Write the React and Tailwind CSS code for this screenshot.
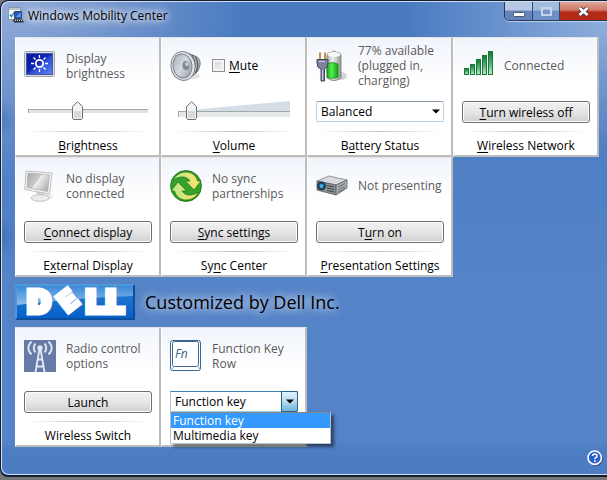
import React, { useState } from "react";

// "&" marks the access key, same as in a win32 resource string
function Caption({ text }) {
  const at = text.indexOf("&");
  if (at < 0) return <>{text}</>;
  return (
    <>
      {text.slice(0, at)}
      <span className="underline underline-offset-2">{text[at + 1]}</span>
      {text.slice(at + 2)}
    </>
  );
}

function Tile({ icon, status, caption, htmlFor, children }) {
  return (
    <section className="h-[120px] min-w-0 pl-2 pr-[7px] flex flex-col border-t border-l border-r-2 border-b-2 border-t-[#e4e4e4] border-l-white border-r-[#bdbdbd] border-b-[#bdbdbd] bg-linear-to-b from-[#f0f4fb] to-white to-35%">
      <div className="h-[55px] shrink-0 flex items-center">
        <div className="w-8 h-8 shrink-0">{icon}</div>
        <div className="ml-2.5 flex-1 leading-[15px] whitespace-nowrap text-[#5a5a5a]">
          {status}
        </div>
      </div>
      <div className="mt-2 h-[22px] shrink-0">{children}</div>
      <div className="mt-2 mx-0.5 h-px shrink-0 bg-linear-to-r from-transparent via-[#c4c4c4] to-transparent" />
      <div className="mt-1.5 leading-[15px] text-center whitespace-nowrap text-black">
        {htmlFor ? (
          <label htmlFor={htmlFor}>
            <Caption text={caption} />
          </label>
        ) : (
          <Caption text={caption} />
        )}
      </div>
    </section>
  );
}

function PushButton({ text }) {
  return (
    <button
      type="button"
      className="block w-full h-[22px] rounded-[3px] border border-[#707070] bg-linear-to-b from-[#f2f2f2] via-[#e6e6e6] via-50% to-[#cfcfcf] leading-[15px] whitespace-nowrap text-black shadow-[inset_0_0_0_1px_#fbfbfb]"
    >
      <Caption text={text} />
    </button>
  );
}

function Slider({ id, value, onChange, wedge }) {
  return (
    <div className={wedge ? "relative h-[22px] mx-2" : "relative h-[22px] mx-1"}>
      {wedge && (
        <svg
          className="absolute left-0 top-0 w-full h-2.5"
          viewBox="0 0 111 10"
          preserveAspectRatio="none"
        >
          <path d="M12 10V9L111 0V10Z" fill="#d5dee6" />
        </svg>
      )}
      <div
        className={
          wedge
            ? "absolute inset-x-0 top-2.5 h-1.5 border-t border-l border-[#a3a8a8] bg-[#e4e8e7]"
            : "absolute inset-x-0 top-2 h-1 border-t border-l border-[#a3a8a8] bg-[#dfe3e2]"
        }
      />
      <svg
        className="absolute top-0 -ml-[5px]"
        style={{ left: `${value}%` }}
        width="11"
        height="19"
        viewBox="0 0 11 19"
      >
        <path
          d="M5.5 .7L10.5 5.5V17.2L9.5 18.5H1.5L.5 17.2V5.5Z"
          fill="#f3f3f3"
          stroke="#6f7071"
        />
        <path d="M2 10H9V17H2Z" fill="#d9dadb" />
      </svg>
      <input
        id={id}
        type="range"
        value={value}
        onChange={(e) => onChange(Number(e.target.value))}
        className="absolute inset-0 w-full h-full opacity-0"
      />
    </div>
  );
}

function BrightnessIcon() {
  return (
    <svg width="32" height="32" viewBox="0 0 32 32">
      <defs>
        <linearGradient id="screen" x1="0" y1="0" x2="1" y2="1">
          <stop offset="0" stopColor="#0a1a9c" />
          <stop offset=".45" stopColor="#0b22b4" />
          <stop offset=".55" stopColor="#2c4fd6" />
          <stop offset="1" stopColor="#5f86ee" />
        </linearGradient>
      </defs>
      <rect x=".5" y="1.5" width="30" height="25" rx="1" fill="#d9dde2" stroke="#a2a7ae" />
      <rect x="2.5" y="3.5" width="26" height="21" fill="url(#screen)" stroke="#4a56a5" />
      <circle cx="15.500" cy="13.500" r="3.700" fill="none" stroke="#fff" strokeWidth="1.800" />
      <path
        d="M15.500 5v3M15.500 19v3M7 13.500h3M21 13.500h3M9.500 7.500l2 2M19.500 17.500l2 2M21.500 7.500l-2 2M11.500 17.500l-2 2"
        stroke="#fff"
        strokeWidth="1.300"
      />
    </svg>
  );
}

function SpeakerIcon() {
  return (
    <svg width="32" height="32" viewBox="0 0 32 32">
      <defs>
        <linearGradient id="cone" x1="0" y1="0" x2="1" y2="1">
          <stop offset="0" stopColor="#9fa8b2" />
          <stop offset=".5" stopColor="#d5dae0" />
          <stop offset="1" stopColor="#8e969f" />
        </linearGradient>
      </defs>
      <ellipse cx="23" cy="26" rx="7" ry="3" fill="#000" opacity=".1" />
      <path d="M15 2L25 6Q31 8 30 15Q29 22 24 25L15 30Z" fill="#b3b9bf" stroke="#777e85" />
      <path d="M22 5Q28 14 22 26M25.500 6.500Q30 15 25.500 23.500" fill="none" stroke="#535a61" strokeWidth="1.300" />
      <ellipse cx="13" cy="16" rx="12" ry="14.500" fill="#e6e9ec" stroke="#80878e" transform="rotate(-8 13 16)" />
      <ellipse cx="12.500" cy="16" rx="9.500" ry="12" fill="url(#cone)" stroke="#777f87" transform="rotate(-8 12.500 16)" />
      <path d="M17 13L6 7M16 19L8 26" stroke="#c6ccd2" />
      <ellipse cx="16" cy="15.500" rx="3.500" ry="4.500" fill="#7f8891" />
      <circle cx="17" cy="14" r="2.200" fill="#bdc3c9" />
    </svg>
  );
}

function BatteryIcon() {
  return (
    <svg width="32" height="32" viewBox="0 0 32 32">
      <defs>
        <linearGradient id="glass">
          <stop offset="0" stopColor="#a3a9a5" />
          <stop offset=".4" stopColor="#eef0ef" />
          <stop offset="1" stopColor="#8d9391" />
        </linearGradient>
        <linearGradient id="charge">
          <stop offset="0" stopColor="#1ba51b" />
          <stop offset=".4" stopColor="#50f250" />
          <stop offset="1" stopColor="#12a012" />
        </linearGradient>
      </defs>
      <ellipse cx="25" cy="26" rx="6" ry="4" fill="#000" opacity=".16" />
      <path d="M11 5Q11 2.500 15 2.500Q18 -.5 21 2.500Q25 2.500 25 5V28Q18 33 11 28Z" fill="url(#glass)" stroke="#888" />
      <ellipse cx="18" cy="4.500" rx="6.500" ry="2.500" fill="#f8f8f8" />
      <path d="M11 14Q17 11 22 14V27Q17 30 11 27Z" fill="url(#charge)" stroke="#0d8a12" strokeWidth=".7" />
      <path d="M4 9V2.500M9 9V2.500" stroke="#c98f45" strokeWidth="2" />
      <path d="M1 9.500H12V13Q12 18 8.500 19V31H5V19Q1 18 1 13Z" fill="#7f829d" stroke="#43455f" />
      <path d="M3 11.500H9M6.500 20V30" stroke="#c9cbe0" />
    </svg>
  );
}

function SignalIcon() {
  return (
    <svg width="32" height="32" viewBox="0 0 32 32">
      <defs>
        <linearGradient id="bar" x1="0" y1="0" x2="0" y2="1">
          <stop offset="0" stopColor="#107a35" />
          <stop offset=".5" stopColor="#4fae6c" />
          <stop offset="1" stopColor="#b9f0c8" />
        </linearGradient>
      </defs>
      <g fill="url(#bar)" stroke="#19793b">
        <rect x="2.500" y="18.500" width="4" height="6" />
        <rect x="8.500" y="14.500" width="4" height="10" />
        <rect x="14.500" y="9.500" width="4" height="15" />
        <rect x="20.500" y="5.500" width="4" height="19" />
        <rect x="26.500" y="1.500" width="4" height="23" />
      </g>
    </svg>
  );
}

function MonitorIcon() {
  return (
    <svg width="32" height="32" viewBox="0 0 32 32">
      <defs>
        <linearGradient id="panel" x1="0" y1="0" x2="1" y2=".6">
          <stop offset="0" stopColor="#a8a8a8" />
          <stop offset=".5" stopColor="#c9c9c9" />
          <stop offset=".55" stopColor="#eee" />
          <stop offset="1" stopColor="#b5b5b5" />
        </linearGradient>
      </defs>
      <ellipse cx="22" cy="27" rx="7" ry="3" fill="#000" opacity=".08" />
      <path d="M12 21L20 23V27H13Z" fill="#d0d0d0" />
      <ellipse cx="16" cy="28" rx="9" ry="3.300" fill="#ececec" stroke="#c4c4c4" />
      <path d="M2 1L28 3L25.500 24L.8 19.500Z" fill="#f3f3f3" stroke="#c0c0c0" />
      <path d="M4 3L25.500 5L23.500 21.500L3 17.500Z" fill="url(#panel)" stroke="#aaa" strokeWidth=".7" />
    </svg>
  );
}

function SyncIcon() {
  return (
    <svg width="32" height="32" viewBox="0 0 32 32">
      <defs>
        <linearGradient id="upper">
          <stop offset="0" stopColor="#b9e88c" />
          <stop offset="1" stopColor="#ffe268" />
        </linearGradient>
      </defs>
      <circle cx="16" cy="16" r="15.400" fill="#35a22b" stroke="#1d7a1b" />
      <path
        d="M3 10Q8 1 18 2Q26 4 27.500 11H31L24 20L15.500 11H20Q17 6.500 11.500 7Q6.500 7.500 3 10Z"
        fill="url(#upper)"
        stroke="#237c1d"
        strokeWidth=".8"
      />
      <path
        d="M29 22Q24 31 14 30Q6 28 4.500 21H1L8 12L16.500 21H12Q15 25.500 20.500 25Q25.500 24.500 29 22Z"
        fill="url(#upper)"
        stroke="#237c1d"
        strokeWidth=".8"
      />
    </svg>
  );
}

function ProjectorIcon() {
  return (
    <svg width="32" height="32" viewBox="0 0 32 32">
      <path d="M1 11L13 6L31 10L20 15Z" fill="#d8dadd" stroke="#7c8186" strokeWidth=".8" />
      <path d="M1 11L20 15V25L1 20Z" fill="#8d9298" stroke="#55595e" strokeWidth=".8" />
      <path d="M20 15L31 10V18L20 25Z" fill="#a8acb0" stroke="#5c6065" strokeWidth=".8" />
      <path d="M22 17L29 13.500M22 20L29 16.500M22 22.500L29 18.500" stroke="#6c7075" />
      <path d="M11 15.500L18 17M11 18L18 19.500M11 20.500L18 22" stroke="#42464a" strokeWidth="1.100" />
      <circle cx="5.500" cy="16" r="4" fill="#164a75" stroke="#2e3438" />
      <circle cx="5.500" cy="16" r="2" fill="#41b3e6" />
    </svg>
  );
}

function RadioIcon() {
  return (
    <svg width="32" height="32" viewBox="0 0 32 32">
      <rect width="32" height="32" fill="#657aa6" />
      <g fill="none" stroke="#e3e9f3" strokeWidth="1.900">
        <path d="M11.500 3.500Q8 8 11.500 12.500M7.500 1.500Q1 8 7.500 14.500" />
        <path d="M20.500 3.500Q24 8 20.500 12.500M24.500 1.500Q31 8 24.500 14.500" />
        <path d="M15.500 9L11.500 32M16.500 9L20.500 32M13.500 19.500H18.500M12.500 26.500H19.500" />
      </g>
      <circle cx="16" cy="8" r="2.700" fill="#e3e9f3" />
    </svg>
  );
}

function FnIcon() {
  return (
    <svg width="32" height="32" viewBox="0 0 32 32">
      <rect x=".5" y=".5" width="30" height="30" rx="2" fill="#fff" stroke="#3d6792" />
      <path d="M1 1L3.500 3.500M30 1L28.500 3M1 30L3.500 27M30 30L28.500 27" stroke="#7f9dbb" />
      <rect x="2.500" y="1.500" width="26" height="25" rx="2" fill="#fff" stroke="#3d6792" />
      <text x="5" y="18" fontFamily="Open Sans, sans-serif" fontStyle="italic" fontSize="12" fill="#355f8a">
        Fn
      </text>
    </svg>
  );
}

function AppIcon() {
  return (
    <svg width="16" height="16" viewBox="0 0 16 16">
      <rect x=".5" y=".5" width="12" height="12" fill="#f3f7fa" stroke="#8b98a5" />
      <path d="M1 2H12" stroke="#b8c5cf" strokeWidth="2" />
      <path d="M2 7.500L3.500 9.500L6 5.500" fill="none" stroke="#2286b5" strokeWidth="1.400" />
      <path d="M6.500 4.500H13.500V11.500H6.500Z" fill="#1f58c8" stroke="#39424d" />
      <path d="M8 10L12.500 5.500V10Z" fill="#64a0ee" />
      <path d="M5 12.500H14.500L16 15.500H6Z" fill="#2b2f36" />
      <path d="M7 13.500H14" stroke="#cfd4da" strokeDasharray="1 1" />
    </svg>
  );
}

function DellLogo() {
  return (
    <svg width="120" height="36" viewBox="0 0 120 36" className="overflow-visible" role="img" aria-label="Dell">
      <defs>
        <linearGradient id="plate" x1="0" y1="0" x2="0" y2="1">
          <stop offset="0" stopColor="#2a7fd0" />
          <stop offset="1" stopColor="#0560c8" />
        </linearGradient>
        <linearGradient id="gloss" x1="0" y1="0" x2="0" y2="1">
          <stop offset="0" stopColor="#3a8ad6" />
          <stop offset="1" stopColor="#8dbdec" />
        </linearGradient>
      </defs>
      <rect width="120" height="36" fill="#0a4f9e" />
      <path d="M0 0H120L118 2H2V34L0 36Z" fill="#4d98d8" />
      <rect x="2" y="2" width="116" height="32" fill="url(#plate)" />
      <path d="M2 2H118V12Q60 14 2 21Z" fill="url(#gloss)" />
      <g fontFamily="Inter, sans-serif" fontWeight="900" fill="#fff" stroke="#fff" strokeWidth="5" textAnchor="middle">
        <text x="24" y="29" fontSize="32">D</text>
        <text x="80" y="29" fontSize="32">L</text>
        <text x="100" y="29" fontSize="32">L</text>
        <text x="0" y="10" fontSize="29" strokeWidth="3" transform="translate(53 17) rotate(-38)">
          E
        </text>
      </g>
    </svg>
  );
}

function HelpIcon() {
  return (
    <svg width="16" height="16" viewBox="0 0 16 16">
      <circle cx="8.500" cy="8.500" r="7.500" fill="#1d3768" opacity=".7" />
      <circle cx="7.700" cy="7.700" r="6.700" fill="#2a5fd0" stroke="#fff" strokeWidth="1.600" />
      <path d="M5.500 6Q5.600 3.900 7.800 3.900Q10 3.900 10 5.900Q10 7 8.700 7.700Q7.800 8.200 7.800 9.200" fill="none" stroke="#fff" strokeWidth="1.500" />
      <rect x="7" y="10.300" width="1.700" height="1.600" fill="#fff" />
    </svg>
  );
}

function WindowButtons() {
  return (
    <div className="flex h-[19px] rounded-bl-[5px] border-l border-b border-[#26395c] overflow-hidden shadow-[0_1px_0_#b9cdea]">
      <button
        type="button"
        aria-label="Minimize"
        className="w-7 flex items-center justify-center border-r border-[#34496e] bg-linear-to-b from-[#b6c8e4] from-45% to-[#6484b9] to-50%"
      >
        <svg width="12" height="5" viewBox="0 0 12 5" className="mt-1.5">
          <rect x=".5" y=".5" width="11" height="4" rx="1" fill="#fff" stroke="#4c5970" />
        </svg>
      </button>
      <button
        type="button"
        aria-label="Maximize"
        disabled
        className="w-[27px] flex items-center justify-center border-r border-[#34496e] bg-linear-to-b from-[#a4bbe0] from-45% to-[#6e90c8] to-50%"
      >
        <svg width="11" height="9" viewBox="0 0 11 9">
          <rect x="1" y="1" width="9" height="7" fill="none" stroke="#c5d4ed" strokeWidth="2" />
          <rect x="3.500" y="3.500" width="4" height="2" fill="none" stroke="#7e98c6" />
        </svg>
      </button>
      <button
        type="button"
        aria-label="Close"
        className="w-[47px] flex items-center justify-center bg-linear-to-b from-[#dfa597] from-0% via-[#cf7665] via-45% to-[#b52a17] to-55%"
      >
        <svg width="13" height="11" viewBox="0 0 13 11">
          <path d="M2.500 2L10.500 9M10.500 2L2.500 9" stroke="#4d3a44" strokeWidth="4.400" />
          <path d="M2.500 2L10.500 9M10.500 2L2.500 9" stroke="#fff" strokeWidth="2.600" />
        </svg>
      </button>
    </div>
  );
}

export default function App() {
  const [brightness, setBrightness] = useState(41);
  const [volume, setVolume] = useState(12);
  const [muted, setMuted] = useState(false);
  const [plan, setPlan] = useState("Balanced");
  const [row, setRow] = useState("Function key");
  const rows = ["Function key", "Multimedia key"];

  return (
    <div className="min-h-screen flex flex-col pb-[3px] bg-[#77767b] font-['Open_Sans',sans-serif] text-[12px]">
      <div className="flex-1 flex flex-col rounded-l-lg border-l border-t border-b-2 border-[#141c30] overflow-hidden bg-[#5483c7]">
        <div className="flex-1 flex flex-col rounded-l-lg border-l border-t border-b border-[#cfe0f5] pl-[13px] pr-2 bg-[radial-gradient(ellipse_16px_20px_at_0px_117px,#3d6cb480,transparent),radial-gradient(ellipse_16px_20px_at_0px_235px,#3765a880,transparent),radial-gradient(ellipse_240px_180px_at_0_0,#93acd8,transparent),radial-gradient(ellipse_200px_130px_at_100%_20px,#8fafdd,transparent),linear-gradient(to_bottom,#4a7bc1,#4a7bc1_60px,#5483c7_270px,#5483c7_440px,#4c7cc1_450px)]">
          <header className="h-[35px] flex items-start justify-between -mr-2">
            <div className="flex items-center h-[26px] -ml-[7px]">
              <AppIcon />
              <h1 className="ml-1 leading-[15px] whitespace-nowrap text-black [text-shadow:0_0_6px_#fff,0_0_10px_#fff,0_0_16px_#fff]">
                Windows Mobility Center
              </h1>
            </div>
            <WindowButtons />
          </header>

          <main className="grid grid-cols-4">
            <Tile icon={<BrightnessIcon />} status={<>Display<br />brightness</>} caption="&Brightness" htmlFor="brightness">
              <Slider id="brightness" value={brightness} onChange={setBrightness} />
            </Tile>
            <Tile
              icon={<SpeakerIcon />}
              status={
                <label className="flex items-center gap-1 text-black">
                  <input
                    type="checkbox"
                    checked={muted}
                    onChange={(e) => setMuted(e.target.checked)}
                    className="appearance-none w-[13px] h-[13px] border border-[#8e8f8f] bg-linear-to-br from-[#cfd3d8] to-[#f6f6f6] shadow-[inset_0_0_0_2px_#f4f4f4] checked:bg-[#4a6b9a]"
                  />
                  <span><Caption text="&Mute" /></span>
                </label>
              }
              caption="&Volume"
              htmlFor="volume"
            >
              <Slider id="volume" value={volume} onChange={setVolume} wedge />
            </Tile>
            <Tile icon={<BatteryIcon />} status={<>77% available<br />(plugged in,<br />charging)</>} caption="B&attery Status" htmlFor="plan">
              <div className="relative">
                <select
                  id="plan"
                  value={plan}
                  onChange={(e) => setPlan(e.target.value)}
                  className="appearance-none block w-full h-[21px] pl-1 rounded-xs border border-[#b5cfe7] border-t-[#8b9bab] bg-white leading-[15px] text-black"
                >
                  <option>Balanced</option>
                  <option>Power saver</option>
                  <option>High performance</option>
                </select>
                <svg className="absolute right-1 top-2 pointer-events-none" width="8" height="5" viewBox="0 0 8 5">
                  <path d="M0 .5H8L4 4.500Z" fill="#000" />
                </svg>
              </div>
            </Tile>
            <Tile icon={<SignalIcon />} status="Connected" caption="&Wireless Network">
              <PushButton text="&Turn wireless off" />
            </Tile>
            <Tile icon={<MonitorIcon />} status={<>No display<br />connected</>} caption="E&xternal Display">
              <PushButton text="&Connect display" />
            </Tile>
            <Tile icon={<SyncIcon />} status={<>No sync<br />partnerships</>} caption="Sy&nc Center">
              <PushButton text="&Sync settings" />
            </Tile>
            <Tile icon={<ProjectorIcon />} status="Not presenting" caption="&Presentation Settings">
              <PushButton text="T&urn on" />
            </Tile>
          </main>

          <div className="my-[7px] flex items-center">
            <DellLogo />
            <h2 className="ml-2.5 text-[18px] leading-5 whitespace-nowrap text-black [text-shadow:0_0_8px_#ffffffc0,0_0_14px_#ffffffc0]">
              Customized by Dell Inc.
            </h2>
          </div>

          <div className="grid grid-cols-4">
            <Tile icon={<RadioIcon />} status={<>Radio control<br />options</>} caption="Wireless Switch">
              <PushButton text="Launch" />
            </Tile>
            <Tile icon={<FnIcon />} status={<>Function Key<br />Row</>} caption="">
              <div className="relative">
                <select
                  aria-label="Function Key Row"
                  value={row}
                  onChange={(e) => setRow(e.target.value)}
                  className="appearance-none block w-full h-[21px] pl-1 border border-[#a5c7dd] border-t-[#3c7fb1] bg-white leading-[15px] text-black"
                >
                  {rows.map((r) => (
                    <option key={r}>{r}</option>
                  ))}
                </select>
                <div className="absolute right-0 top-0 w-[17px] h-[21px] flex items-center justify-center rounded-r-xs border border-[#2c628b] bg-linear-to-b from-[#e0f2fb] via-[#b5dcef] via-50% to-[#6cb2d8] pointer-events-none">
                  <svg width="8" height="5" viewBox="0 0 8 5">
                    <path d="M0 .5H8L4 4.500Z" fill="#000" />
                  </svg>
                </div>
                <ul
                  role="listbox"
                  aria-label="Function Key Row"
                  className="absolute left-0 top-full z-10 w-[161px] border border-[#b9c3cf] border-t-[#8a8a8a] bg-white leading-[15px] text-black shadow-[3px_3px_3px_rgb(0_0_0/0.5)]"
                >
                  {rows.map((r) => (
                    <li
                      key={r}
                      role="option"
                      aria-selected={r === row}
                      onClick={() => setRow(r)}
                      className={r === row ? "px-0.5 h-[15px] bg-[#3399ff] text-white" : "px-0.5 h-[15px]"}
                    >
                      {r}
                    </li>
                  ))}
                </ul>
              </div>
            </Tile>
          </div>

          <footer className="mt-auto mb-2 flex justify-end -mr-1">
            <button type="button" aria-label="Help" className="block w-4 h-4">
              <HelpIcon />
            </button>
          </footer>
        </div>
      </div>
    </div>
  );
}
